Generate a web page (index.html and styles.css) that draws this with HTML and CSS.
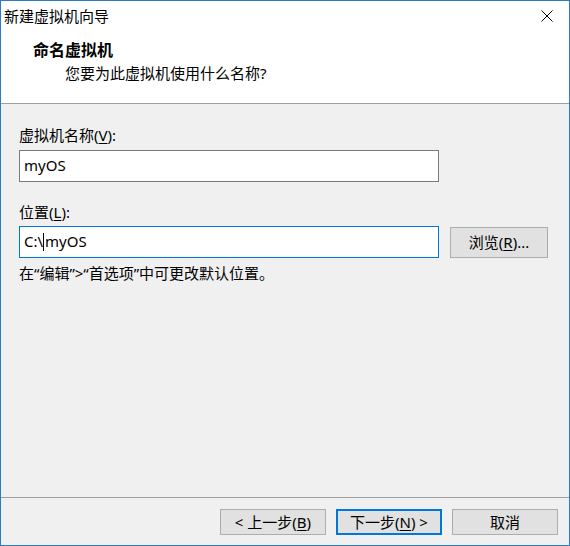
FILE: index.html
```html
<!DOCTYPE html>
<html lang="zh-CN">
<head>
<meta charset="utf-8">
<title>新建虚拟机向导</title>
<link rel="stylesheet" href="styles.css">
</head>
<body>
<div class="window">
  <div class="titlebar">
    <span class="title">新建虚拟机向导</span>
    <span class="close" aria-label="关闭">
      <svg width="12" height="12" viewBox="0 0 12 12"><path d="M0.5 0.5 L11.5 11.5 M11.5 0.5 L0.5 11.5" stroke="#000" stroke-width="1" fill="none"/></svg>
    </span>
  </div>
  <div class="header">
    <div class="heading">命名虚拟机</div>
    <div class="subtitle">您要为此虚拟机使用什么名称?</div>
  </div>
  <div class="content">
    <div class="label">虚拟机名称(<u>V</u>):</div>
    <div class="field name-field" role="textbox">myOS</div>
    <div class="label loc-label">位置(<u>L</u>):</div>
    <div class="row">
      <div class="field focused" role="textbox">C:\<span class="caret"></span>myOS</div>
      <button class="btn browse">浏览(<u>R</u>)...</button>
    </div>
    <div class="hint">在“编辑”&gt;“首选项”中可更改默认位置。</div>
  </div>
  <div class="footer">
    <button class="btn">&lt; 上一步(<u>B</u>)</button>
    <button class="btn default">下一步(<u>N</u>) &gt;</button>
    <button class="btn">取消</button>
  </div>
</div>
</body>
</html>
```

FILE: styles.css
```css
html, body {
  margin: 0;
  padding: 0;
  background: #f0f0f0;
}
body {
  font-family: "Noto Sans", "Noto Sans CJK SC", sans-serif;
  font-size: 15px;
  color: #000;
}
.window {
  width: 570px;
  height: 546px;
  box-sizing: border-box;
  border: 1px solid #2a7ac6;
  display: flex;
  flex-direction: column;
  background: #f0f0f0;
}
.titlebar {
  height: 31px;
  flex: none;
  background: #fff;
  display: flex;
  align-items: center;
  justify-content: space-between;
  padding-left: 3px;
}
.title {
  line-height: 31px;
}
.close {
  width: 44px;
  height: 31px;
  display: flex;
  align-items: center;
  justify-content: center;
}
.close svg {
  display: block;
  margin-top: -1px;
}
.header {
  flex: none;
  background: #fff;
  padding: 8px 0 20px 32px;
  border-bottom: 1px solid #a0a0a0;
}
.heading {
  font-weight: bold;
  font-size: 16px;
  line-height: 20px;
}
.subtitle {
  margin-top: 3px;
  padding-left: 32px;
  line-height: 20px;
}
.content {
  flex: 1;
  padding: 21px 20px 0 18px;
}
.label {
  line-height: 20px;
}
.label u, .btn u {
  text-underline-offset: 2px;
}
.field {
  width: 420px;
  height: 32px;
  box-sizing: border-box;
  border: 1px solid #7a7a7a;
  background: #fff;
  padding: 0 4px 3px;
  display: flex;
  align-items: center;
  white-space: pre;
}
.name-field {
  margin-top: 5px;
}
.loc-label {
  margin-top: 20px;
}
.row {
  margin-top: 4px;
  display: flex;
  align-items: center;
  gap: 11px;
}
.field.focused {
  border-color: #0078d7;
}
.caret {
  display: inline-block;
  width: 1px;
  height: 18px;
  background: #000;
  margin: 2px 1px 0 0;
}
.btn {
  font: inherit;
  color: #000;
  background: #e1e1e1;
  border: 1px solid #adadad;
  padding: 0;
  margin: 0;
  line-height: 20px;
}
.browse {
  width: 98px;
  height: 31px;
}
.hint {
  margin-top: 5px;
  line-height: 20px;
}
.footer {
  flex: none;
  border-top: 1px solid #a0a0a0;
  padding: 11px 11px 10px;
  display: flex;
  justify-content: flex-end;
  gap: 10px;
}
.footer .btn {
  width: 106px;
  height: 26px;
}
.footer .btn.default {
  border: 2px solid #0078d7;
}
```
